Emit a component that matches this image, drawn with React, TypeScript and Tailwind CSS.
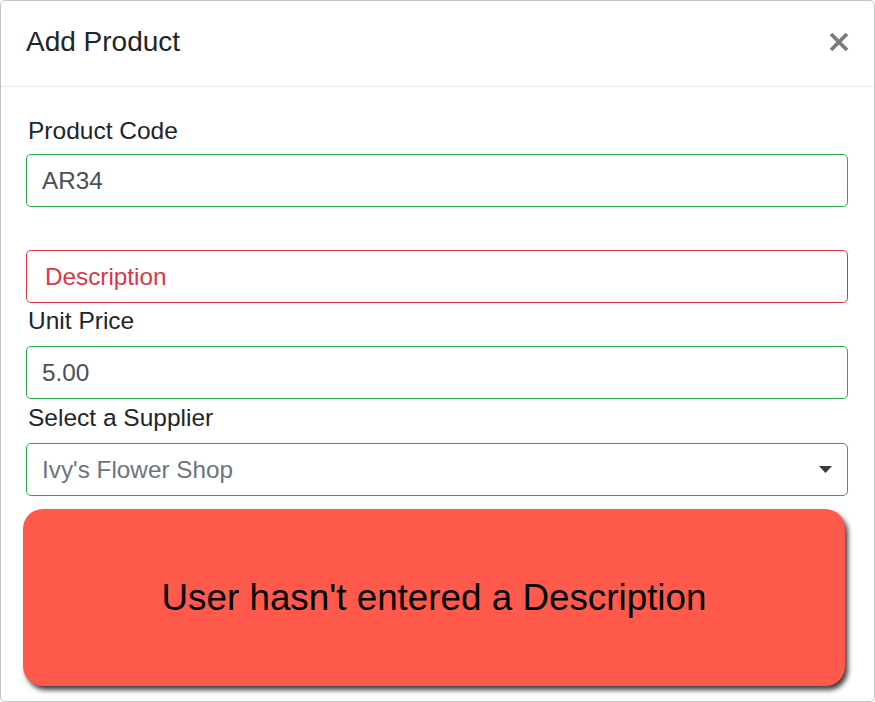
import React from "react";

export default function App() {
  const font = "font-['Liberation_Sans',Arial,sans-serif]";
  return (
    <div className={`w-[875px] h-[702px] bg-white ${font}`}>
      <div className="w-full h-full border border-[#c4c4c4] rounded-[5px] overflow-hidden flex flex-col">
        <div className="h-[86px] shrink-0 border-b border-[#e9ecef] pl-[25px] pr-[25px] pt-[20px] flex items-start justify-between">
          <h5 className="text-[28px] leading-[42px] text-[#212529]">Add Product</h5>
          <button className="mt-[11px] w-[20px] h-[20px] flex items-center justify-center" aria-label="Close">
            <svg width="20" height="20" viewBox="0 0 20 20">
              <path d="M2 2 L18 18 M18 2 L2 18" stroke="#7b7b7b" strokeWidth="3.8" strokeLinecap="butt" />
            </svg>
          </button>
        </div>
        <div className="pl-[25px] pr-[26px] pt-[26px] flex flex-col">
          <label className="text-[24.5px] leading-[36px] text-[#212529] pl-[2px] mb-[5px]">Product Code</label>
          <div className="h-[53px] border border-[#28a745] rounded-[5px] flex items-center px-[15px] pt-[2px] text-[24.3px] text-[#495057]">
            AR34
          </div>
          <div className="h-[53px] mt-[43px] border border-[#dc3545] rounded-[5px] flex items-center pl-[18px] pr-[15px] pt-[2px] text-[24.3px] text-[#dc3545]">
            Description
          </div>
          <label className="text-[24.5px] leading-[36px] text-[#212529] pl-[2px] mb-[7px]">Unit Price</label>
          <div className="h-[53px] border border-[#28a745] rounded-[5px] flex items-center px-[15px] pt-[2px] text-[24.3px] text-[#495057]">
            5.00
          </div>
          <label className="text-[24.5px] leading-[36px] text-[#212529] pl-[2px] mt-[1px] mb-[7px]">Select a Supplier</label>
          <div className="h-[53px] border border-[#28a745] rounded-[5px] flex items-center justify-between pl-[15px] pr-[15px] text-[24.3px] text-[#6c757d]">
            <span className="pt-[1px]">Ivy's Flower Shop</span>
            <svg width="13" height="7" viewBox="0 0 13 7">
              <path d="M0 0 L13 0 L6.5 7 Z" fill="#343a40" />
            </svg>
          </div>
          <div className="-ml-[3px] mr-[3px] mt-[13px] h-[177px] rounded-[20px] bg-[#ff5a4b] shadow-[3px_4px_5px_rgba(0,0,0,0.75)] flex items-center justify-center">
            <span className="text-[36.8px] text-black">User hasn't entered a Description</span>
          </div>
        </div>
      </div>
    </div>
  );
}
